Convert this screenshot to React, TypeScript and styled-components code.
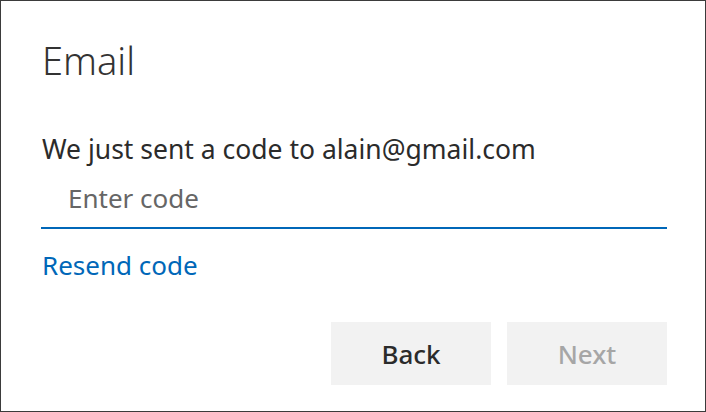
import * as React from 'react'
import styled, { createGlobalStyle } from 'styled-components'

const GlobalStyle = createGlobalStyle`
  html, body {
    margin: 0;
    padding: 0;
    background: #fff;
  }
  * {
    box-sizing: border-box;
  }
`

export default function App() {
  return (
    <>
      <GlobalStyle />
      <Card>
        <Title>Email</Title>
        <Description>We just sent a code to alain@gmail.com</Description>
        <CodeInput placeholder="Enter code" autoFocus />
        <Link href="#">Resend code</Link>
        <ButtonRow>
          <Button>Back</Button>
          <Button disabled>Next</Button>
        </ButtonRow>
      </Card>
    </>
  )
}

// styles
const Card = styled.div`
  width: 706px;
  height: 412px;
  border: 1px solid #3b3b3b;
  padding: 35px 38px 0 40px;
  display: flex;
  flex-direction: column;
  font-family: 'Noto Sans', 'Open Sans', sans-serif;
  color: #2b2b2b;
`

const Title = styled.h1`
  margin: 0 0 0 1px;
  font-size: 38px;
  font-weight: 300;
  line-height: 48px;
  color: #333;
`

const Description = styled.p`
  margin: 48px 0 0 1px;
  font-size: 26.5px;
  line-height: 34px;
  color: #2b2b2b;
`

const CodeInput = styled.input`
  margin-top: 2px;
  width: 100%;
  height: 61px;
  border: none;
  border-bottom: 2px solid #0067b8;
  border-radius: 0;
  outline: none;
  padding: 0 0 0 27px;
  font-family: inherit;
  font-size: 26px;
  color: #2b2b2b;
  caret-color: #2b2b2b;
  background: transparent;

  &::placeholder {
    color: #666;
  }
`

const Link = styled.a`
  align-self: flex-start;
  margin: 19px 0 0 1px;
  font-size: 26px;
  line-height: 34px;
  color: #0067b8;
  text-decoration: none;
`

const ButtonRow = styled.div`
  margin-top: 40px;
  display: flex;
  justify-content: flex-end;
  gap: 16px;
`

const Button = styled.button`
  width: 160px;
  height: 63px;
  border: none;
  border-radius: 0;
  padding: 0;
  background: #f2f2f2;
  font-family: inherit;
  font-size: 26px;
  font-weight: 500;
  color: #2b2b2b;

  &:disabled {
    color: #a6a6a6;
  }
`
